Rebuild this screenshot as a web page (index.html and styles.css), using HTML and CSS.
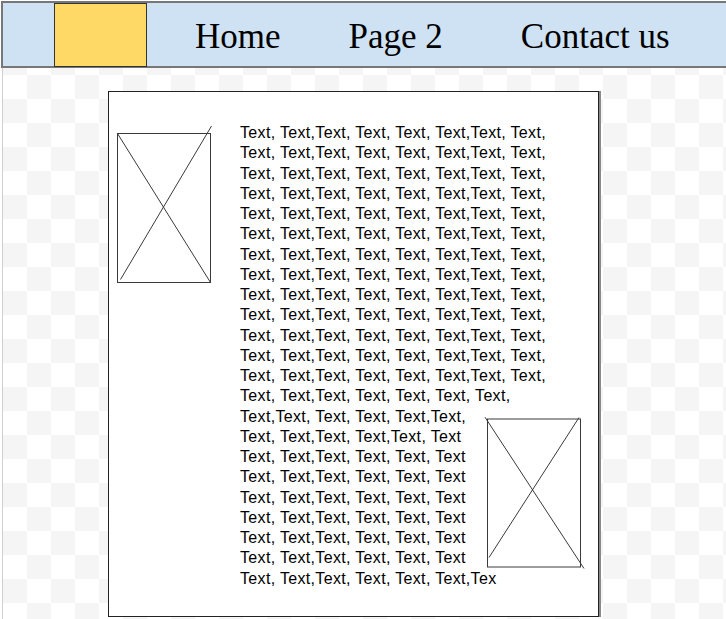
FILE: index.html
```html
<!DOCTYPE html>
<html lang="en">
<head>
<meta charset="utf-8">
<title>Layout</title>
<link rel="stylesheet" href="styles.css">
</head>
<body>
<header class="topbar">
  <div class="logo"></div>
  <nav class="nav">
    <a class="nav-link" href="#">Home</a>
    <a class="nav-link" href="#">Page 2</a>
    <a class="nav-link nav-link--last" href="#">Contact us</a>
  </nav>
</header>
<main class="stage">
  <article class="card">
    <svg class="pic pic--left" width="96" height="158" viewBox="0 0 96 158">
      <rect x="1.5" y="8.5" width="93" height="149"/>
      <line x1="1.5" y1="8.5" x2="94.5" y2="157.5"/>
      <line x1="95.5" y1="1" x2="4.5" y2="154.5"/>
    </svg>
    <p class="copy">
      Text, Text,Text, Text, Text, Text,Text, Text,
      Text, Text,Text, Text, Text, Text,Text, Text,
      Text, Text,Text, Text, Text, Text,Text, Text,
      Text, Text,Text, Text, Text, Text,Text, Text,
      Text, Text,Text, Text, Text, Text,Text, Text,
      Text, Text,Text, Text, Text, Text,Text, Text,
      Text, Text,Text, Text, Text, Text,Text, Text,
      Text, Text,Text, Text, Text, Text,Text, Text,
      Text, Text,Text, Text, Text, Text,Text, Text,
      Text, Text,Text, Text, Text, Text,Text, Text,
      Text, Text,Text, Text, Text, Text,Text, Text,
      Text, Text,Text, Text, Text, Text,Text, Text,
      Text, Text,Text, Text, Text, Text,Text, Text,
      Text, Text,Text, Text, Text, Text, Text,
      <svg class="pic pic--right" width="102" height="161" viewBox="0 0 102 161"><rect x="3.5" y="12" width="93" height="148"/><line x1="1" y1="10.2" x2="100" y2="161.5"/><line x1="95" y1="10.5" x2="5" y2="150.5"/></svg>Text,Text, Text, Text, Text,Text,
      Text, Text,Text, Text,Text, Text
      Text, Text,Text, Text, Text, Text
      Text, Text,Text, Text, Text, Text
      Text, Text,Text, Text, Text, Text
      Text, Text,Text, Text, Text, Text
      Text, Text,Text, Text, Text, Text
      Text, Text,Text, Text, Text, Text
      Text, Text,Text, Text, Text, Text,Tex
    </p>
  </article>
</main>
</body>
</html>
```

FILE: styles.css
```css
html,
body {
  margin: 0;
  height: 100%;
  overflow: hidden;
}

body {
  box-sizing: border-box;
  padding: 1px 0 0 1px;
  background: #fff;
  display: flex;
  flex-direction: column;
  font-family: "Liberation Serif", "Times New Roman", serif;
  color: #000;
}

.topbar {
  display: flex;
  align-items: flex-start;
  height: 63px;
  flex-shrink: 0;
  background: #cfe2f3;
  border: 2px solid #777;
  border-right: 0;
}

.logo {
  box-sizing: border-box;
  flex-shrink: 0;
  width: 93px;
  height: 64px;
  margin-left: 51px;
  background: #ffd966;
  border: 1px solid #333;
}

.nav {
  display: flex;
  gap: 68px;
  margin-left: 48px;
  padding-top: 14px;
  white-space: nowrap;
}

.nav-link {
  font-family: "Liberation Serif", "Times New Roman", serif;
  font-size: 35px;
  line-height: normal;
  color: #000;
  text-decoration: none;
}

.nav-link--last {
  margin-left: 10px;
}

.stage {
  flex: 1;
  margin-left: 1px;
  border-left: 1px solid #cfcfcf;
  background: repeating-conic-gradient(#ffffff 0 25%, #f5f5f5 0 50%) 0 -17px / 48px 48px;
}

.card {
  box-sizing: border-box;
  display: flex;
  align-items: flex-start;
  width: 491px;
  height: 526px;
  margin: 23px 0 0 105px;
  padding: 31px 0 0 7px;
  background: #fff;
  border: 1px solid #222;
  box-shadow: 2px 0 0 #8a8a8a;
}

.pic {
  display: block;
  overflow: visible;
  flex-shrink: 0;
}

.pic rect {
  fill: none;
  stroke: #3a3a3a;
  stroke-width: 1;
}

.pic line {
  stroke: #3a3a3a;
  stroke-width: 1;
}

.pic--left {
  margin-top: 2px;
}

.pic--right {
  float: right;
  margin-right: -20px;
}

.copy {
  width: 326px;
  margin: 0 0 0 28px;
  font-family: "Liberation Sans", Arial, sans-serif;
  font-size: 16px;
  line-height: 20.25px;
  letter-spacing: 0.33px;
  color: #000;
}
```
